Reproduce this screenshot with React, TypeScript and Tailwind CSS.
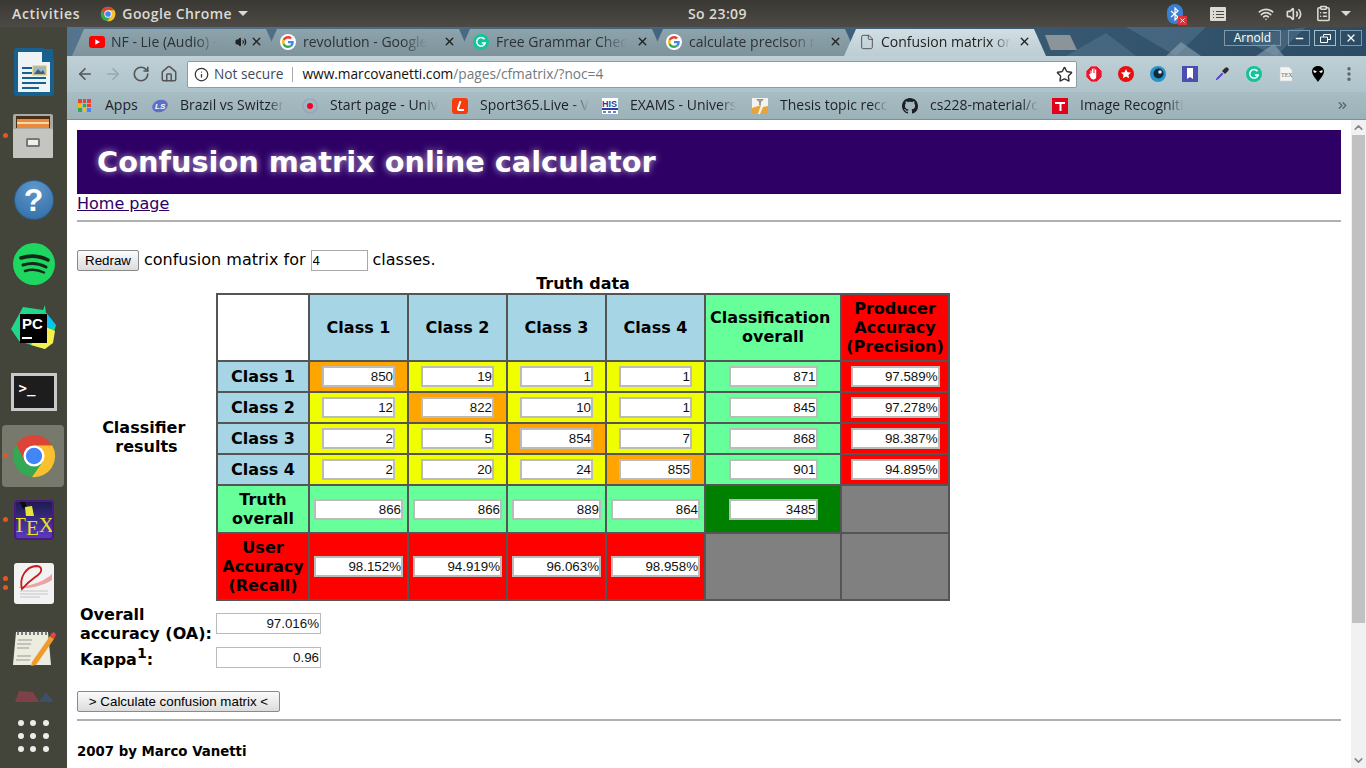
import React from "react";
import {
  ArrowLeft,
  ArrowRight,
  RotateCw,
  Home,
  Info,
  Star,
  X,
  Minus,
  Volume2,
  Wifi,
  ClipboardList,
  File,
  ChevronsRight,
  ChevronUp,
  ChevronDown,
  EllipsisVertical,
} from "lucide-react";

const ChromeLogo = ({ size = 16 }: { size?: number }) => (
  <svg width={size} height={size} viewBox="0 0 48 48">
    <circle cx="24" cy="24" r="22" fill="#34a853" />
    <path d="M43.05 13A22 22 0 0 0 5.5 12L14.5 29.5 24 13Z" fill="#db4437" />
    <path d="M43.05 13H24L33.5 29.5 22 46A22 22 0 0 0 43.05 13Z" fill="#fbc02d" />
    <circle cx="24" cy="24" r="11" fill="#fff" />
    <circle cx="24" cy="24" r="8.5" fill="#4285f4" />
  </svg>
);

const GoogleG = () => (
  <span className="flex h-4 w-4 items-center justify-center rounded-full bg-white">
    <svg width="12" height="12" viewBox="0 0 48 48">
      <path fill="#EA4335" d="M24 9.5c3.54 0 6.71 1.22 9.21 3.6l6.85-6.85C35.9 2.38 30.47 0 24 0 14.62 0 6.51 5.38 2.56 13.22l7.98 6.19C12.43 13.72 17.74 9.5 24 9.5z" />
      <path fill="#4285F4" d="M46.98 24.55c0-1.57-.15-3.09-.38-4.55H24v9.02h12.94c-.58 2.96-2.26 5.48-4.78 7.18l7.73 6c4.51-4.18 7.09-10.36 7.09-17.65z" />
      <path fill="#FBBC05" d="M10.53 28.59c-.48-1.45-.76-2.99-.76-4.59s.27-3.14.76-4.59l-7.98-6.19C.92 16.46 0 20.12 0 24c0 3.88.92 7.54 2.56 10.78l7.97-6.19z" />
      <path fill="#34A853" d="M24 48c6.48 0 11.93-2.13 15.89-5.81l-7.73-6c-2.15 1.45-4.92 2.3-8.16 2.3-6.26 0-11.57-4.22-13.47-9.91l-7.98 6.19C6.51 42.62 14.62 48 24 48z" />
    </svg>
  </span>
);

const Grammarly = ({ size = 16 }: { size?: number }) => (
  <svg width={size} height={size} viewBox="0 0 16 16">
    <circle cx="8" cy="8" r="8" fill="#15c39a" />
    <path d="M11.5 5.2A4.3 4.3 0 1 0 12.2 9H8.8" fill="none" stroke="#fff" strokeWidth="1.5" />
  </svg>
);

const YouTube = () => (
  <svg width="16" height="12" viewBox="0 0 16 12">
    <rect width="16" height="12" rx="3" fill="#f00" />
    <path d="M6.3 3.2 11 6 6.3 8.8Z" fill="#fff" />
  </svg>
);

// titles are cut where the browser fades them out
const tabs = [
  { title: "NF - Lie (Audio) -", icon: <YouTube />, audio: true },
  { title: "revolution - Google", icon: <GoogleG /> },
  { title: "Free Grammar Chec", icon: <Grammarly /> },
  { title: "calculate precison r", icon: <GoogleG /> },
];

const bookmarkIcons: Record<string, React.ReactNode> = {
  ls: (
    <svg width="16" height="16" viewBox="0 0 16 16">
      <ellipse cx="8" cy="8" rx="8" ry="6" fill="#5c6fc9" transform="rotate(-20 8 8)" />
      <text x="3" y="11" fontSize="8" fontWeight="700" fontStyle="italic" fill="#fff" fontFamily="Liberation Sans">
        LS
      </text>
    </svg>
  ),
  start: (
    <svg width="16" height="16" viewBox="0 0 16 16">
      <circle cx="8" cy="8" r="7" fill="none" stroke="#8f9cc0" strokeWidth="1.5" opacity=".6" />
      <circle cx="8" cy="8" r="3" fill="#f4002a" />
    </svg>
  ),
  sport: (
    <svg width="16" height="16" viewBox="0 0 16 16">
      <rect width="16" height="16" rx="3" fill="#f63b0c" />
      <path d="M8.5 3 6 10.5c-.3 1 .3 1.5 1.2 1.5H12" fill="none" stroke="#fff" strokeWidth="2" />
    </svg>
  ),
  his: (
    <svg width="16" height="16" viewBox="0 0 16 16">
      <rect width="16" height="16" fill="#fff" />
      <text x="0" y="9" fontSize="9" fill="#2a3f9e" fontWeight="700" fontFamily="Liberation Sans">
        HIS
      </text>
      <path d="M0 10h16v2H0z" fill="#2a3f9e" />
      <path d="M1 13h3v2H1zm5 0h3v2H6zm5 0h3v2h-3z" fill="#6f7fd0" />
    </svg>
  ),
  thesis: (
    <svg width="16" height="16" viewBox="0 0 16 16">
      <rect width="16" height="16" fill="#f3f3ee" />
      <path d="M4 1h8L9 4v3H7V4Z" fill="#999" />
      <path d="M0 16v-6l9-3-3 9Zm8 0 3-7 5-1v8Z" fill="#e8a33a" />
    </svg>
  ),
  github: (
    <svg width="16" height="16" viewBox="0 0 16 16">
      <path
        fill="#1b1f23"
        d="M8 0C3.58 0 0 3.58 0 8c0 3.54 2.29 6.53 5.47 7.59.4.07.55-.17.55-.38 0-.19-.01-.82-.01-1.49-2.01.37-2.53-.49-2.69-.94-.09-.23-.48-.94-.82-1.13-.28-.15-.68-.52-.01-.53.63-.01 1.08.58 1.23.82.72 1.21 1.87.87 2.33.66.07-.52.28-.87.51-1.07-1.78-.2-3.64-.89-3.64-3.95 0-.87.31-1.59.82-2.15-.08-.2-.36-1.02.08-2.12 0 0 .67-.21 2.2.82.64-.18 1.32-.27 2-.27s1.36.09 2 .27c1.53-1.04 2.2-.82 2.2-.82.44 1.1.16 1.92.08 2.12.51.56.82 1.27.82 2.15 0 3.07-1.87 3.75-3.65 3.95.29.25.54.73.54 1.48 0 1.07-.01 1.93-.01 2.2 0 .21.15.46.55.38A8.01 8.01 0 0 0 16 8c0-4.42-3.58-8-8-8Z"
      />
    </svg>
  ),
  tum: (
    <svg width="16" height="16" viewBox="0 0 16 16">
      <rect width="16" height="16" fill="#e3001b" />
      <path d="M3 4h10v2H9.5v7h-2V6H3Z" fill="#fff" />
    </svg>
  ),
};

const bookmarks = [
  { icon: "ls", title: "Brazil vs Switzer" },
  { icon: "start", title: "Start page - Univ" },
  { icon: "sport", title: "Sport365.Live - V" },
  { icon: "his", title: "EXAMS - Univers" },
  { icon: "thesis", title: "Thesis topic recc" },
  { icon: "github", title: "cs228-material/c" },
  { icon: "tum", title: "Image Recogniti" },
];

const extensions = [
  <svg key="stop" width="16" height="16" viewBox="0 0 16 16">
    <path d="M5 0h6l5 5v6l-5 5H5l-5-5V5Z" fill="#e8172c" />
    <path d="M5 0h6l5 5v6l-5 5H5l-5-5V5Z" fill="none" stroke="#fff" strokeWidth=".7" opacity=".7" />
    <path d="M4.5 8V4.500h1V7h.5V2.800h1V7h.5V2.500h1V7h.5V3.500h1.200v7c0 1.700-1 3-3 3-1.500 0-2.500-1-3.200-3L3 8Z" fill="#fff" />
  </svg>,
  <svg key="star" width="16" height="16" viewBox="0 0 16 16">
    <circle cx="8" cy="8" r="8" fill="#e8100f" />
    <path d="m8 3 1.500 3.200 3.500.4-2.600 2.300.7 3.400L8 10.600l-3.100 1.700.7-3.400L3 6.600l3.500-.4Z" fill="#fff" />
  </svg>,
  <svg key="eye" width="16" height="16" viewBox="0 0 16 16">
    <circle cx="8" cy="8" r="8" fill="#2a93c9" />
    <circle cx="8.500" cy="7.500" r="5" fill="#0e2c3d" />
    <circle cx="10" cy="6" r="1.800" fill="#dfe8ee" />
  </svg>,
  <svg key="mark" width="16" height="16" viewBox="0 0 16 16">
    <rect width="16" height="16" fill="#4b50b0" />
    <path d="M5 2h6v11l-3-2-3 2Z" fill="#fff" />
  </svg>,
  <svg key="dropper" width="16" height="16" viewBox="0 0 16 16">
    <path d="M1 15l1-3 6-6 2 2-6 6Z" fill="#5a54c8" stroke="#ddd" strokeWidth=".6" />
    <path d="M8 5l3-3c1-1 2-1 3 0s1 2 0 3l-3 3Z" fill="#2b2b2b" />
  </svg>,
  <Grammarly key="g" />,
  <svg key="tex" width="16" height="16" viewBox="0 0 16 16">
    <path d="M2 1h9l3 3v11H2Z" fill="#f4f4f4" stroke="#ccc" strokeWidth=".5" />
    <text x="3" y="11" fontSize="6" fill="#666" fontFamily="Liberation Serif">
      TEX
    </text>
  </svg>,
  <svg key="ninja" width="16" height="16" viewBox="0 0 16 16">
    <path d="M8 0c4 0 6 2.500 6 5.500C14 9 10 13 8 16 6 13 2 9 2 5.500 2 2.500 4 0 8 0Z" fill="#000" />
    <path d="M3.500 4 7 5.500 5 7 3.500 6Zm9 0L9 5.500 11 7l1.500-1Z" fill="#fff" />
  </svg>,
];

type Running = { dots?: number; active?: boolean; node: React.ReactNode };

const dockItems: Running[] = [
  {
    node: (
      <svg width="40" height="48" viewBox="0 0 40 48">
        <path d="M3 0h26l11 11v34a3 3 0 0 1-3 3H3a3 3 0 0 1-3-3V3a3 3 0 0 1 3-3Z" fill="#18618f" />
        <path d="M4 4h24v10h8v30H4Z" fill="#eef3f6" />
        <path d="M30 1h9v9Z" fill="#18618f" />
        <path d="M8 19h10v2H8zm0 5h10v2H8zm0 5h24v2H8zm0 5h24v2H8zm0 5h17v2H8z" fill="#18618f" />
        <rect x="19" y="18" width="13" height="9" fill="#9cb9cc" stroke="#e3c04e" />
        <path d="M20 26l4-5 3 3 2-2 2 4Z" fill="#43627a" />
      </svg>
    ),
  },
  {
    dots: 1,
    node: (
      <svg width="42" height="44" viewBox="0 0 42 44">
        <rect x="0" y="0" width="40" height="44" rx="2" fill="#a9a9a6" />
        <rect x="3" y="2" width="34" height="12" fill="#4a2f18" />
        <rect x="4" y="5" width="32" height="9" fill="#e9893c" />
        <rect x="4" y="8" width="32" height="2" fill="#f4d9a8" />
        <rect x="0" y="15" width="40" height="29" rx="1" fill="#c4c4c1" />
        <rect x="13" y="24" width="14" height="9" rx="1.500" fill="#777" />
        <rect x="15" y="26" width="10" height="5" fill="#eee" />
      </svg>
    ),
  },
  {
    node: (
      <span className="flex h-10 w-10 items-center justify-center rounded-full border border-[#2b5e8e] bg-[radial-gradient(circle_at_50%_20%,#5f97cb,#2f6ca3)] font-['Liberation_Sans',sans-serif] text-[32px] leading-none font-bold text-white">
        ?
      </span>
    ),
  },
  {
    node: (
      <svg width="42" height="42" viewBox="0 0 42 42">
        <circle cx="21" cy="21" r="21" fill="#1ed760" />
        <path d="M8 15c9-3 19-2 27 2" fill="none" stroke="#14281a" strokeWidth="3.600" strokeLinecap="round" />
        <path d="M10 22c8-2.500 16-1.700 23 2" fill="none" stroke="#14281a" strokeWidth="3" strokeLinecap="round" />
        <path d="M12 28c6-2 13-1.500 19 1.500" fill="none" stroke="#14281a" strokeWidth="2.500" strokeLinecap="round" />
      </svg>
    ),
  },
  {
    node: (
      <svg width="46" height="46" viewBox="0 0 46 46">
        <path d="M12 2 32 5 34 0 36 18 45 20 42 30 34 44 20 40 8 36 0 24Z" fill="#21d789" />
        <path d="M34 6 45 20 36 26Z" fill="#07c3f2" />
        <path d="M30 20 44 26 42 38 34 44 20 40Z" fill="#f5f04c" />
        <rect x="9" y="9" width="27" height="29" fill="#000" />
        <text x="11" y="24" fontSize="15" fontWeight="700" fill="#fff" fontFamily="Liberation Sans">
          PC
        </text>
        <rect x="11" y="32" width="10" height="2" fill="#fff" />
      </svg>
    ),
  },
  {
    node: (
      <span className="flex h-[38px] w-[46px] flex-col items-start justify-start border-[3px] border-[#c9c9c9] bg-[#1d1d1d] px-[5px] py-[2px] font-['DejaVu_Sans_Mono',monospace] text-[14px] leading-[20px] font-bold text-white">
        &gt;_
      </span>
    ),
  },
  { dots: 1, active: true, node: <ChromeLogo size={46} /> },
  {
    dots: 1,
    node: (
      <span className="relative flex h-10 w-10 items-end justify-center overflow-hidden rounded-[4px] border-2 border-[#4a1a80] bg-[linear-gradient(#1c1c50,#5a3ac0)] pb-[2px] font-['Liberation_Serif',serif] text-[21px] leading-none text-[#f1e11f]">
        <svg className="absolute top-0 left-0" width="36" height="20" viewBox="0 0 36 20">
          <path d="M4 0h5l2 5-4 2Z" fill="#0b0b0b" />
          <path d="M9 5 16 4 18 14H10Z" fill="#e8e23a" />
        </svg>
        <span className="relative">T</span>
        <span className="relative translate-y-[3px]">E</span>
        <span className="relative">X</span>
      </span>
    ),
  },
  {
    dots: 2,
    node: (
      <svg width="40" height="42" viewBox="0 0 40 42">
        <rect width="40" height="41" rx="3" fill="#f2f2f2" />
        <path d="M5 24c12-1 26-6 33-13v6C30 22 18 26 5 25Z" fill="#eba3a3" />
        <path d="M8 26C5 14 12 4 22 3c6 0 7 5 2 9-4 3-9 6-16 14Z" fill="none" stroke="#cc1818" strokeWidth="1.800" />
        <path d="M6 28h28M6 31h28M6 34h20" stroke="#c5c5c5" strokeWidth="1" />
      </svg>
    ),
  },
  {
    node: (
      <svg width="44" height="40" viewBox="0 0 44 40">
        <path d="M4 4h32l3 33H1Z" fill="#ececdf" />
        <path d="M6 2v5m4-5v5m4-5v5m4-5v5m4-5v5m4-5v5m4-5v5m4-5v5" stroke="#555" strokeWidth="1.500" />
        <path d="M6 12h14M5 16h14M5 20h12M5 28h14M4 32h14" stroke="#999" strokeWidth="1" />
        <path d="M20 34 38 8l4 3-18 26-5 1Z" fill="#ef9a2b" />
        <path d="M38 7l2-2c1-1 2-1 3 0s1 3 0 4l-1 2Z" fill="#e8434a" />
      </svg>
    ),
  },
];

const Dock = () => (
  <div className="flex w-[67px] shrink-0 flex-col items-center bg-[#43443a] pt-[13px]">
    {dockItems.map((item, i) => (
      <div key={i} className="relative flex h-[64px] w-full items-center justify-center">
        {item.active && <div className="absolute top-[1px] left-[2px] h-[62px] w-[62px] rounded-[4px] bg-[#77796c]" />}
        {item.dots === 1 && <span className="absolute top-[29px] left-[3px] h-[5px] w-[5px] rounded-full bg-[#e95420]" />}
        {item.dots === 2 && (
          <>
            <span className="absolute top-[24px] left-[3px] h-[5px] w-[5px] rounded-full bg-[#e95420]" />
            <span className="absolute top-[33px] left-[3px] h-[5px] w-[5px] rounded-full bg-[#e95420]" />
          </>
        )}
        <span className="relative flex items-center justify-center">{item.node}</span>
      </div>
    ))}
    <div className="flex h-[32px] w-full items-center justify-center opacity-50">
      <svg width="42" height="16" viewBox="0 0 42 16">
        <path d="M2 14 6 3l14 1 6 10Z" fill="#b83f55" />
        <path d="M26 14l7-10 8 10Z" fill="#3d5a99" />
      </svg>
    </div>
    <div className="grid h-[48px] w-full grid-cols-3 place-items-center px-[15px] py-[5px]">
      {Array.from({ length: 9 }).map((_, i) => (
        <span key={i} className="h-[6px] w-[6px] rounded-full bg-[#ecece8]" />
      ))}
    </div>
  </div>
);

const TopBar = () => (
  <div className="flex h-[27px] shrink-0 items-center bg-[linear-gradient(#3a3833,#4d4a45)] font-['Open_Sans',sans-serif] text-[14px] font-semibold tracking-[0.4px] text-[#dbdbd3]">
    <div className="flex w-[688px] items-center pl-[12px]">
      <span className="tracking-[0.7px]">Activities</span>
      <span className="ml-[20px]">
        <ChromeLogo size={16} />
      </span>
      <span className="ml-[6px]">Google Chrome</span>
      <span className="ml-[6px] h-0 w-0 border-x-[5px] border-t-[5px] border-x-transparent border-t-[#dbdbd3]" />
    </div>
    <span>So 23:09</span>
    <div className="ml-auto flex items-center pr-[15px]">
      <span className="relative mr-[27px] flex h-[20px] w-[16px] items-center justify-center rounded-full bg-[#3a7fd0]">
        <svg width="10" height="14" viewBox="0 0 10 14">
          <path d="M1 4l7 6-3 3V1l3 3-7 6" fill="none" stroke="#fff" strokeWidth="1.200" />
        </svg>
        <span className="absolute right-[-4px] bottom-[-1px] flex h-[9px] w-[9px] items-center justify-center bg-[#e0303a]">
          <X size={7} color="#fff" strokeWidth={3} />
        </span>
      </span>
      <svg width="16" height="14" viewBox="0 0 16 14" className="mr-[32px]">
        <rect width="16" height="14" rx="1" fill="#dbdbd3" />
        <path d="M3 4h1v1H3zm3 0h8v1H6zM3 7h1v1H3zm3 0h8v1H6zm-3 3h1v1H3zm3 0h8v1H6z" fill="#4a4843" />
      </svg>
      <Wifi size={16} strokeWidth={2.500} className="mr-[12px]" />
      <Volume2 size={16} strokeWidth={2.500} className="mr-[13px]" />
      <ClipboardList size={17} strokeWidth={2.200} className="mr-[9px]" />
      <span className="h-0 w-0 border-x-[5px] border-t-[5px] border-x-transparent border-t-[#dbdbd3]" />
    </div>
  </div>
);

const TabStrip = () => (
  <div className="relative flex h-[29px] shrink-0 items-end overflow-hidden bg-[linear-gradient(90deg,#54738c,#3f6079_60%,#2b4c64)] pl-[5px] font-['Open_Sans',sans-serif] text-[14px] text-[#2c3236]">
    <svg className="absolute top-0 right-0" width="320" height="29" viewBox="0 0 320 29">
      <path d="M20 29 60 6l30 23Zm60-29 50 29 30-29Zm110 10 40 19 30-29Z" fill="#5b7d95" opacity=".45" />
      <path d="M120 29l15-14 20 14Zm90 0 18-12 10 12Z" fill="#9db3bf" opacity=".5" />
    </svg>
    {tabs.map((tab, i) => (
      <div
        key={i}
        className={`relative mr-[-13px] flex h-[27px] w-[206px] shrink-0 items-center bg-[linear-gradient(#8ea4ad,#7d929b)] pr-[15px] pb-[2px] [clip-path:polygon(0_100%,12px_0,calc(100%-12px)_0,100%_100%)] ${
          i === 0 ? "pl-[17px]" : "pl-[15px]"
        }`}
      >
        <span className="flex w-[16px] shrink-0 items-center justify-center">{tab.icon}</span>
        <span className={`${i === 0 ? "ml-[6px]" : "ml-[7px]"} whitespace-nowrap [mask-image:linear-gradient(90deg,#000_80%,transparent)]`}>
          {tab.title}
        </span>
        {tab.audio && <Volume2 size={12} fill="#222" className="mr-[2px] ml-auto shrink-0" color="#222" />}
        <X size={13} strokeWidth={2.500} className={`shrink-0 text-[#222] ${tab.audio ? "ml-[1px]" : "ml-auto"}`} />
      </div>
    ))}
    <div className="relative flex h-[27px] w-[202px] shrink-0 items-center bg-[linear-gradient(#d2dfe4,#bccdd4)] pr-[15px] pb-[2px] pl-[15px] text-[#222] [clip-path:polygon(0_100%,12px_0,calc(100%-12px)_0,100%_100%)]">
      <File size={16} strokeWidth={1.300} className="shrink-0 text-[#444]" />
      <span className="ml-[6px] whitespace-nowrap [mask-image:linear-gradient(90deg,#000_85%,transparent)]">
        Confusion matrix or
      </span>
      <X size={13} strokeWidth={2.500} className="ml-auto shrink-0" />
    </div>
    <div className="relative mb-[6px] ml-[-1px] h-[15px] w-[32px] shrink-0 bg-[#8b9499] [clip-path:polygon(0_0,78%_0,100%_100%,18%_100%)]" />
    <div className="absolute top-[3px] right-[4px] flex items-center gap-[4px] text-white">
      <span className="mr-[3px] flex h-[16px] w-[57px] items-center justify-center border border-[#7f98a8] font-['Open_Sans',sans-serif] text-[12px] leading-none">
        Arnold
      </span>
      <span className="flex h-[16px] w-[22px] items-center justify-center border border-[#7f98a8]">
        <Minus size={11} strokeWidth={3} />
      </span>
      <span className="flex h-[16px] w-[22px] items-center justify-center border border-[#a9bdc9]">
        <svg width="11" height="9" viewBox="0 0 11 9">
          <path d="M3.500 2.500V.5h7v5H8M.5 3h7v5.500h-7Z" fill="none" stroke="#fff" />
        </svg>
      </span>
      <span className="flex h-[16px] w-[22px] items-center justify-center border border-[#7f98a8]">
        <X size={12} strokeWidth={2.500} />
      </span>
    </div>
  </div>
);

const Toolbar = () => (
  <div className="flex h-[36px] shrink-0 items-center bg-[linear-gradient(#bfd0d6,#aec3cb)] pl-[9px] text-[#555]">
    <div className="flex w-[111px] items-center gap-[10px]">
      <ArrowLeft size={18} strokeWidth={2.200} />
      <ArrowRight size={18} strokeWidth={2.200} className="text-[#98a9b0]" />
      <RotateCw size={18} strokeWidth={2.200} />
      <Home size={18} strokeWidth={2} />
    </div>
    <div className="flex h-[27px] w-[890px] items-center rounded-[2px] border border-[#8e9ba1] bg-white font-['Open_Sans',sans-serif] text-[13.7px]">
      <Info size={15} strokeWidth={2} className="ml-[6px] text-[#333]" />
      <span className="ml-[5px] text-[#3c4a5c]">Not secure</span>
      <span className="mx-[9px] h-[15px] w-px bg-[#aaa]" />
      <span className="text-[#111]">www.marcovanetti.com</span>
      <span className="text-[#6f7a80]">/pages/cfmatrix/?noc=4</span>
      <Star size={17} strokeWidth={2} className="mr-[3px] ml-auto text-[#333]" />
    </div>
    <div className="ml-px flex items-center">
      {extensions.map((ext, i) => (
        <span key={i} className="flex w-[32px] justify-center">
          {ext}
        </span>
      ))}
      <EllipsisVertical size={18} strokeWidth={2.500} className="ml-[6px] text-[#5a6468]" />
    </div>
  </div>
);

const BookmarkBar = () => (
  <div className="flex h-[28px] shrink-0 items-center border-b border-[#7f8f96] bg-[linear-gradient(#a8bcc4,#9db1b9)] pl-[11px] font-['Open_Sans',sans-serif] text-[14px] text-[#1d2226]">
    <div className="flex w-[74px] items-center">
      <span className="grid h-[13px] w-[13px] grid-cols-3 gap-[1px]">
        {["#ea4335", "#ea4335", "#ea4335", "#fbbc05", "#34a853", "#ea4335", "#34a853", "#fbbc05", "#4285f4"].map((c, i) => (
          <span key={i} style={{ backgroundColor: c }} />
        ))}
      </span>
      <span className="mb-[2px] ml-[14px]">Apps</span>
    </div>
    {bookmarks.map((b) => (
      <div key={b.title} className="flex w-[150px] shrink-0 items-center">
        <span className="flex w-[16px] shrink-0">{bookmarkIcons[b.icon]}</span>
        <span className="mb-[2px] ml-[12px] whitespace-nowrap [mask-image:linear-gradient(90deg,#000_85%,transparent)]">
          {b.title}
        </span>
      </div>
    ))}
    <ChevronsRight size={13} strokeWidth={2.500} className="mr-[17px] ml-auto text-[#5a666c]" />
  </div>
);

const Num = ({ value, w = "w-[73px] pr-0" }: { value: string; w?: string }) => (
  <input
    readOnly
    value={value}
    className={`${w} h-[21px] border-2 border-[#bbbbbb] bg-white pl-[2px] text-right align-middle font-['Liberation_Sans',sans-serif] text-[13.33px] font-normal text-[#111]`}
  />
);

const matrix = [
  { name: "Class 1", cells: ["850", "19", "1", "1"], total: "871", prec: "97.589%" },
  { name: "Class 2", cells: ["12", "822", "10", "1"], total: "845", prec: "97.278%" },
  { name: "Class 3", cells: ["2", "5", "854", "7"], total: "868", prec: "98.387%" },
  { name: "Class 4", cells: ["2", "20", "24", "855"], total: "901", prec: "94.895%" },
];

const td = "border-2 border-[#555] p-0 text-center align-middle";
const wide = "w-[89px] pr-0";
const bottomInput = "w-[105px] !border pr-px";

const MatrixTable = () => (
  <table className="w-[733px] table-fixed border-collapse text-[16px] leading-[19px] font-bold text-black">
    <colgroup>
      <col className="w-[92px]" />
      <col className="w-[99px]" />
      <col className="w-[99px]" />
      <col className="w-[99px]" />
      <col className="w-[99px]" />
      <col className="w-[136px]" />
      <col className="w-[108px]" />
    </colgroup>
    <tbody>
      <tr className="h-[67px]">
        <td className={`${td} bg-white`} />
        {["Class 1", "Class 2", "Class 3", "Class 4"].map((c) => (
          <td key={c} className={`${td} bg-[#a6d5e6]`}>
            {c}
          </td>
        ))}
        <td className={`${td} bg-[#66ff99] pb-[2px]`}>
          Classification&nbsp;
          <br />
          overall
        </td>
        <td className={`${td} bg-[#ff0000]`}>
          Producer
          <br />
          Accuracy
          <br />
          (Precision)
        </td>
      </tr>
      {matrix.map((row, r) => (
        <tr key={row.name} className="h-[31px]">
          <td className={`${td} bg-[#a6d5e6]`}>{row.name}</td>
          {row.cells.map((v, c) => (
            <td key={c} className={`${td} ${r === c ? "bg-[#ffa500]" : "bg-[#f0ff00]"}`}>
              <Num value={v} />
            </td>
          ))}
          <td className={`${td} bg-[#66ff99]`}>
            <Num value={row.total} w={wide} />
          </td>
          <td className={`${td} bg-[#ff0000]`}>
            <Num value={row.prec} w={wide} />
          </td>
        </tr>
      ))}
      <tr className="h-[48px]">
        <td className={`${td} bg-[#66ff99]`}>
          Truth
          <br />
          overall
        </td>
        {["866", "866", "889", "864"].map((v, i) => (
          <td key={i} className={`${td} bg-[#66ff99]`}>
            <Num value={v} w={wide} />
          </td>
        ))}
        <td className={`${td} bg-[#008000]`}>
          <Num value="3485" w={wide} />
        </td>
        <td className={`${td} bg-[#808080]`} />
      </tr>
      <tr className="h-[67px]">
        <td className={`${td} bg-[#ff0000]`}>
          User
          <br />
          Accuracy
          <br />
          (Recall)
        </td>
        {["98.152%", "94.919%", "96.063%", "98.958%"].map((v, i) => (
          <td key={i} className={`${td} bg-[#ff0000]`}>
            <Num value={v} w={wide} />
          </td>
        ))}
        <td className={`${td} bg-[#808080]`} />
        <td className={`${td} bg-[#808080]`} />
      </tr>
    </tbody>
  </table>
);

const pageBtn =
  "h-[21px] rounded-[2px] border border-[#8a8a8a] bg-[linear-gradient(#fbfbfb,#dcdcdc)] font-['Liberation_Sans',sans-serif] text-[13.33px] leading-none text-black";

const Page = () => (
  <div className="flex min-h-0 flex-1 bg-white">
    <div className="min-w-0 flex-1 overflow-hidden px-[10px] pt-[10px] font-['DejaVu_Sans',sans-serif] text-[16px] leading-[19px] text-black">
      <h1 className="flex h-[64px] items-center bg-[#2e0066] pl-[20px] text-[28.8px] font-bold text-white [text-shadow:0_0_7px_rgba(255,255,255,0.65)]">
        Confusion matrix online calculator
      </h1>
      <a className="block text-[#2e0066] underline">Home page</a>
      <hr className="mt-[7px] border-t-2 border-[#b0b0b0]" />
      <div className="mt-[28px] flex h-[21px] items-center">
        <button className={`${pageBtn} w-[62px]`}>Redraw</button>
        <span className="mb-[2px] ml-[5px]">confusion matrix for</span>
        <input
          readOnly
          value="4"
          className="ml-[5px] h-[21px] w-[57px] border border-[#a9a9a9] bg-white px-[1px] font-['Liberation_Sans',sans-serif] text-[13.33px]"
        />
        <span className="mb-[2px] ml-[5px]">classes.</span>
      </div>
      <div className="flex">
        <div className="flex w-[139px] shrink-0 items-center justify-center pt-[2px] text-center font-bold">
          Classifier&nbsp;
          <br />
          results
        </div>
        <div className="w-[733px]">
          <div className="mt-[3px] pl-[1px] text-center font-bold">Truth data</div>
          <MatrixTable />
        </div>
      </div>
      <div className="mt-[3px] flex flex-col">
        <div className="flex items-center">
          <div className="w-[139px] translate-y-px pl-[3px] font-bold">
            Overall
            <br />
            accuracy (OA):
          </div>
          <Num value="97.016%" w={bottomInput} />
        </div>
        <div className="mt-[5px] flex items-center">
          <div className="w-[139px] translate-y-[2px] pl-[3px] font-bold">
            Kappa<sup className="text-[14px]">1</sup>:
          </div>
          <Num value="0.96" w={bottomInput} />
        </div>
      </div>
      <button className={`${pageBtn} mt-[23px] block w-[203px]`}>&gt; Calculate confusion matrix &lt;</button>
      <hr className="mt-[7px] border-t-2 border-[#b0b0b0]" />
      <p className="mt-[21px] text-[13.33px] font-bold">2007 by Marco Vanetti</p>
    </div>
    <div className="flex w-[15px] shrink-0 flex-col items-center bg-[#f1f1f1]">
      <ChevronUp size={13} strokeWidth={3} className="h-[15px] text-[#888]" />
      <div className="h-[488px] w-[13px] bg-[#c1c1c1]" />
      <ChevronDown size={13} strokeWidth={3} className="mt-auto h-[15px] text-[#888]" />
    </div>
  </div>
);

export default function App() {
  return (
    <div className="flex h-screen w-screen flex-col overflow-hidden">
      <TopBar />
      <div className="flex min-h-0 flex-1">
        <Dock />
        <div className="flex min-w-0 flex-1 flex-col">
          <TabStrip />
          <Toolbar />
          <BookmarkBar />
          <Page />
        </div>
      </div>
    </div>
  );
}
